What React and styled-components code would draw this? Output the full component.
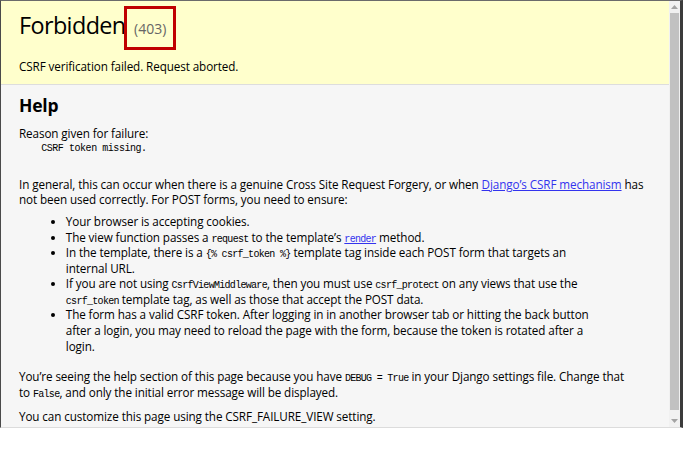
import React from "react";
import styled, { createGlobalStyle } from "styled-components";

const GlobalStyle = createGlobalStyle`
  html, body {
    margin: 0;
    padding: 0;
    background: #ffffff;
  }
  body {
    font-family: "Open Sans", "Noto Sans", sans-serif;
    color: #000000;
  }
`;

const Window = styled.div`
  box-sizing: border-box;
  width: 683px;
  height: 428px;
  display: flex;
  border-top: 1px solid #6b6b6b;
  border-left: 1px solid #4a4a4a;
  border-right: 3px solid #3b3b3b;
  border-bottom: 1px solid #dcdcdc;
  background: #eeeeee;
  overflow: hidden;
`;

const Viewport = styled.div`
  flex: 1;
  min-width: 0;
  overflow: hidden;
  font-size: 11.7px;
  line-height: 15.6px;
  letter-spacing: -0.1px;
`;

const Summary = styled.div`
  padding: 9px 18px;
  background: #ffffcc;
  border-bottom: 1px solid #dddddd;
`;

const Title = styled.h1`
  margin: 0 0 9.4px;
  font-size: 23.4px;
  font-weight: normal;
  line-height: 31px;
  letter-spacing: -0.6px;
`;

const Status = styled.span`
  position: relative;
  margin-left: 3px;
  font-size: 14px;
  line-height: 1;
  letter-spacing: 0;
  color: #666666;

  &::after {
    content: "";
    position: absolute;
    left: -10px;
    right: -10px;
    top: -13px;
    bottom: -12px;
    border: 3px solid #c00000;
  }
`;

const Info = styled.div`
  padding: 9px 18px;
  background: #f6f6f6;
  border-bottom: 1px solid #dddddd;
`;

const SectionTitle = styled.h2`
  margin: 0;
  font-size: 17.5px;
  font-weight: bold;
  line-height: 23.3px;
  letter-spacing: -0.2px;
`;

const Para = styled.p`
  margin: 0;
  padding-top: 9px;
`;

const Pre = styled.pre`
  margin: 0;
  font-family: "Liberation Mono", monospace;
  font-size: 10px;
  letter-spacing: -0.45px;
  line-height: 13px;
`;

const List = styled.ul`
  margin: 5.85px 46.8px;
  padding: 0;
`;

const Code = styled.code`
  font-family: "Liberation Mono", monospace;
  font-size: 10px;
  line-height: 1;
  letter-spacing: -0.7px;
`;

const Link = styled.a`
  color: #3333ee;
  text-decoration: underline;
`;

const Scrollbar = styled.div`
  flex: none;
  width: 11px;
  display: flex;
  flex-direction: column;
  align-items: center;
  background: #f1f1f1;
`;

const ScrollArrow = styled.div`
  height: 12px;
  width: 100%;
  display: flex;
  align-items: center;
  justify-content: center;
`;

const Thumb = styled.div`
  width: 9px;
  height: 397px;
  background: #c1c1c1;
`;

const Spacer = styled.div`
  flex: 1;
`;

const Arrow = ({ down }) => (
  <ScrollArrow>
    <svg width="7" height="4" viewBox="0 0 7 4">
      <path d={down ? "M0 0h7L3.5 4z" : "M0 4h7L3.5 0z"} fill="#a3a3a3" />
    </svg>
  </ScrollArrow>
);

const App = () => {
  return (
    <>
      <GlobalStyle />
      <Window>
        <Viewport>
          <Summary>
            <Title>
              Forbidden <Status>(403)</Status>
            </Title>
            <Para>CSRF verification failed. Request aborted.</Para>
          </Summary>
          <Info>
            <SectionTitle>Help</SectionTitle>
            <Para>Reason given for failure:</Para>
            <Pre>{"    CSRF token missing.\n    "}</Pre>
            <Para>
              In general, this can occur when there is a genuine Cross Site
              Request Forgery, or when{" "}
              <Link href="#">Django’s CSRF mechanism</Link> has not been used
              correctly. For POST forms, you need to ensure:
            </Para>
            <List>
              <li>Your browser is accepting cookies.</li>
              <li>
                The view function passes a <Code>request</Code> to the
                template’s{" "}
                <Link href="#">
                  <Code>render</Code>
                </Link>{" "}
                method.
              </li>
              <li>
                In the template, there is a <Code>{"{% csrf_token %}"}</Code>{" "}
                template tag inside each POST form that targets an internal
                URL.
              </li>
              <li>
                If you are not using <Code>CsrfViewMiddleware</Code>, then you
                must use <Code>csrf_protect</Code> on any views that use the{" "}
                <Code>csrf_token</Code> template tag, as well as those that
                accept the POST data.
              </li>
              <li>
                The form has a valid CSRF token. After logging in in another
                browser tab or hitting the back button after a login, you may
                need to reload the page with the form, because the token is
                rotated after a login.
              </li>
            </List>
            <Para>
              You’re seeing the help section of this page because you have{" "}
              <Code>DEBUG = True</Code> in your Django settings file. Change
              that
              <br />
              to <Code>False</Code>, and only the initial error message will be
              displayed.
            </Para>
            <Para>
              You can customize this page using the CSRF_FAILURE_VIEW setting.
            </Para>
          </Info>
        </Viewport>
        <Scrollbar>
          <Arrow />
          <Thumb />
          <Spacer />
          <Arrow down />
        </Scrollbar>
      </Window>
    </>
  );
};

export default App;
